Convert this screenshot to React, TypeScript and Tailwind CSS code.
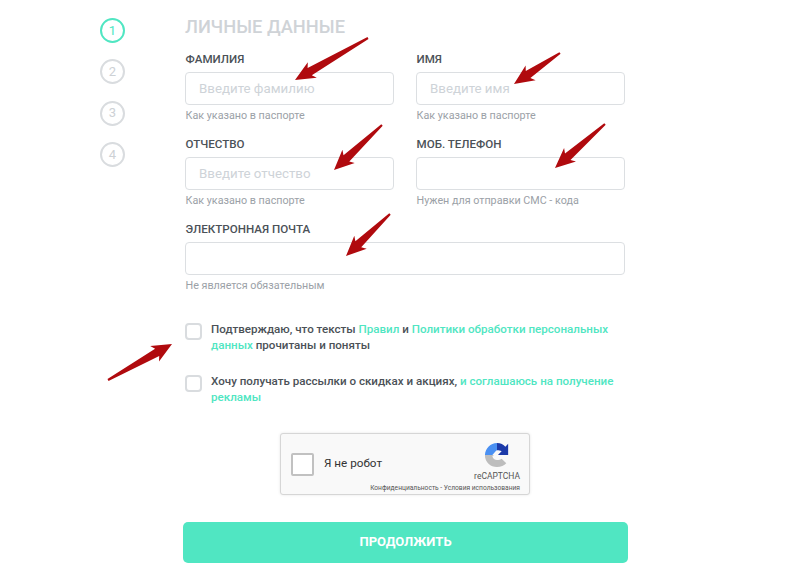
import React from "react";

const arrows: [number, number, number, number][] = [
  [368, 38, 295, 80],
  [560, 53, 514, 84],
  [382, 125, 334, 170],
  [605, 124, 555, 168],
  [390, 214, 346, 256],
  [108, 380, 172, 344],
];

function arrowPoints(x1: number, y1: number, x2: number, y2: number) {
  const dx = x2 - x1;
  const dy = y2 - y1;
  const len = Math.hypot(dx, dy);
  const ux = dx / len;
  const uy = dy / len;
  const nx = -uy;
  const ny = ux;
  const p = (along: number, off: number) =>
    `${(x1 + ux * along + nx * off).toFixed(1)},${(y1 + uy * along + ny * off).toFixed(1)}`;
  const h = len - 17;
  return [p(0, -1), p(h, -4.2), p(h - 3, -9), p(len, 0), p(h - 3, 9), p(h, 4.2), p(0, 1)].join(" ");
}

function Field({ label, placeholder, hint, wide }: { label: string; placeholder?: string; hint: string; wide?: boolean }) {
  return (
    <div className={wide ? "col-span-2" : ""}>
      <div className="h-[14px] pl-[0.5px] text-[11.6px] leading-[14px] font-medium text-[#4b5157]">{label}</div>
      <div className="mt-[6px] h-[33px] rounded-[4px] border border-[#dcdfe2] bg-white pl-[13px] text-[13.3px] leading-[31px] text-[#ced3d8]">
        {placeholder}
      </div>
      <div className="mt-[4px] h-[14px] pl-[0.5px] text-[10.75px] leading-[14px] text-[#9ba1a7]">{hint}</div>
    </div>
  );
}

function Step({ n, active }: { n: number; active?: boolean }) {
  return (
    <div
      className={
        active
          ? "flex h-[25px] w-[25px] items-center justify-center rounded-full border-2 border-[#50e6c2] text-[13px] text-[#50e6c2]"
          : "flex h-[25px] w-[25px] items-center justify-center rounded-full border-2 border-[#d9dcdf] text-[13px] text-[#cdd1d5]"
      }
    >
      {n}
    </div>
  );
}

function Check() {
  return <div className="h-[17px] w-[17px] shrink-0 rounded-[4px] border-2 border-[#d9dcdf] bg-white" />;
}

export default function App() {
  return (
    <div className="relative h-[585px] w-[800px] overflow-hidden bg-white font-['Roboto',sans-serif]">
      <div className="flex pl-[100px] pt-[17px]">
        <div className="mt-[1px] flex w-[85px] shrink-0 flex-col gap-[16.3px]">
          <Step n={1} active />
          <Step n={2} />
          <Step n={3} />
          <Step n={4} />
        </div>
        <div className="w-[440px]">
          <h1 className="h-[20px] text-[18.3px] leading-[20px] font-medium text-[#cfd3d7]">ЛИЧНЫЕ ДАННЫЕ</h1>
          <div className="mt-[15px] grid grid-cols-[209px_209px] gap-x-[22px] gap-y-[14px]">
            <Field label="ФАМИЛИЯ" placeholder="Введите фамилию" hint="Как указано в паспорте" />
            <Field label="ИМЯ" placeholder="Введите имя" hint="Как указано в паспорте" />
            <Field label="ОТЧЕСТВО" placeholder="Введите отчество" hint="Как указано в паспорте" />
            <Field label="МОБ. ТЕЛЕФОН" hint="Нужен для отправки СМС - кода" />
            <Field label="ЭЛЕКТРОННАЯ ПОЧТА" hint="Не является обязательным" wide />
          </div>
          <div className="mt-[30px] flex gap-[9px] text-[11.6px] leading-[15.5px] font-medium text-[#4b5157]">
            <Check />
            <p className="-mt-[1px] w-[412px]">
              Подтверждаю, что тексты <span className="text-[#50e6c2]">Правил</span> и{" "}
              <span className="text-[#50e6c2]">Политики обработки персональных данных</span> прочитаны и поняты
            </p>
          </div>
          <div className="mt-[22px] flex gap-[9px] text-[11.6px] leading-[15.5px] font-medium text-[#4b5157]">
            <Check />
            <p className="-mt-[1px] w-[412px]">
              Хочу получать рассылки о скидках и акциях,{" "}
              <span className="text-[#50e6c2]">и соглашаюсь на получение рекламы</span>
            </p>
          </div>
          <div className="mt-[28px] ml-[95px] flex h-[62px] w-[250px] rounded-[3px] border border-[#d6d6d6] bg-[#f9f9f9] shadow-[0_0_3px_rgba(0,0,0,0.1)]">
            <div className="flex w-0 grow items-center pl-[10px]">
              <div className="h-[23px] w-[23px] shrink-0 rounded-[2px] border-2 border-[#c1c1c1] bg-white" />
              <span className="ml-[10px] text-[11.7px] whitespace-nowrap text-[#333]">Я не робот</span>
            </div>
            <div className="flex shrink-0 flex-col items-end pt-[8px] pr-[9px]">
              <svg viewBox="0 0 28 28" className="mr-[10px] h-[26px] w-[26px]">
                <path d="M14 1 C7 1 1.5 6.5 1 14 L9 14 L13 9.5 L14 9 Z" fill="#4a90f2" />
                <path d="M14 1 C18 1 21 2.5 23 5 L26 2 V14 H15 L19 10 C17.5 9.3 16 9 14 9 Z" fill="#1c3aa9" />
                <path d="M1 14 C1 22 7 27 14 27 C18 27 22 25.5 24 23 L19 18 C18 19 16 19.5 14 19.5 C11.5 19.5 9.5 17.5 9 15 L11 14 Z" fill="#bdbdbd" />
              </svg>
              <span className="mt-[3px] text-[8.5px] leading-[10px] text-[#555]">reCAPTCHA</span>
              <span className="mt-[3px] text-[6.65px] leading-[8px] whitespace-nowrap text-[#555]">
                Конфиденциальность - Условия использования
              </span>
            </div>
          </div>
          <button className="mt-[27px] -ml-[2px] block h-[41px] w-[445px] rounded-[5px] bg-[#50e6c2] pb-[2px] text-center text-[13px] font-bold text-white">
            ПРОДОЛЖИТЬ
          </button>
        </div>
      </div>
      <svg viewBox="0 0 800 585" className="pointer-events-none absolute top-0 left-0 h-[585px] w-[800px]">
        {arrows.map((a, i) => (
          <polygon key={i} points={arrowPoints(a[0], a[1], a[2], a[3])} fill="#b00a0e" />
        ))}
      </svg>
    </div>
  );
}
